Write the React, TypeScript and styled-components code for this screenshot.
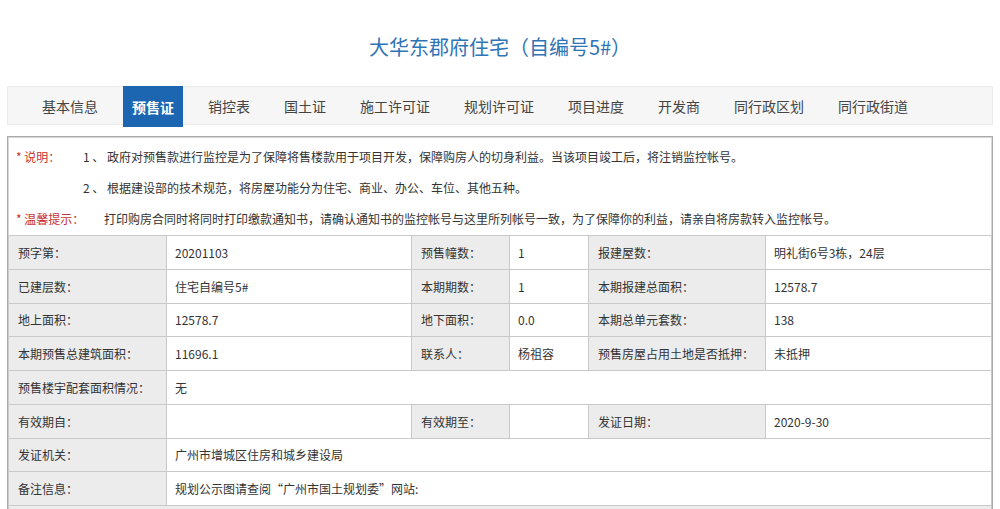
import React from "react";
import styled, { createGlobalStyle } from "styled-components";

const Global = createGlobalStyle`
  html, body { margin: 0; padding: 0; background: #fff; }
  body { font-family: "Noto Sans CJK SC", "Liberation Sans", sans-serif; color: #333; }
`;

const Page = styled.div`
  width: 986px;
  margin: 0 auto;
`;

const Title = styled.h1`
  margin: 0;
  padding-top: 34px;
  height: 86px;
  box-sizing: border-box;
  text-align: center;
  font-size: 20px;
  line-height: 26px;
  font-weight: normal;
  color: #2f74b5;
`;

const TabBar = styled.ul`
  list-style: none;
  margin: 0;
  padding: 0 0 0 25px;
  height: 39px;
  display: flex;
  gap: 16px;
  background: #f6f6f6;
  border: 1px solid #ebebeb;
  box-sizing: border-box;
`;

const Tab = styled.li<{ $active?: boolean }>`
  padding: 0 9px;
  height: ${(p) => (p.$active ? "41px" : "37px")};
  margin-top: ${(p) => (p.$active ? "-1px" : "0")};
  display: flex;
  align-items: center;
  font-size: 14px;
  color: ${(p) => (p.$active ? "#fff" : "#444")};
  font-weight: ${(p) => (p.$active ? "bold" : "normal")};
  background: ${(p) => (p.$active ? "#1c66b1" : "transparent")};
`;

const Frame = styled.div`
  margin-top: 11px;
  border: 1px solid #a9a9a9;
  box-shadow: inset 0 0 0 1px #d6d6d6;
  font-size: 12px;
`;

const Notes = styled.div`
  padding: 4px 0 1px 0;
`;

const NoteLine = styled.div`
  display: flex;
  height: 31px;
  align-items: center;
  padding-left: 8px;
`;

const NoteLabel = styled.span<{ $w: number }>`
  color: #c8322f;
  width: ${(p) => p.$w}px;
  flex: none;
`;

const NoteText = styled.span`
  color: #333;
  white-space: pre;
`;

const Table = styled.table`
  width: 100%;
  border-collapse: collapse;
  table-layout: fixed;
`;

const Row = styled.tr`
  height: 33.75px;
`;

const Label = styled.td`
  background: #ececec;
  border: 1px solid #c9c9c9;
  padding: 0 0 0 9px;
  color: #333;
  white-space: nowrap;
`;

const Value = styled.td`
  background: #fff;
  border: 1px solid #c9c9c9;
  padding: 0 0 0 8px;
  color: #333;
  white-space: nowrap;
`;

const Tail = styled.td`
  background: #ececec;
  border: 1px solid #c9c9c9;
  height: 20px;
`;

const tabs = [
  "基本信息",
  "预售证",
  "销控表",
  "国土证",
  "施工许可证",
  "规划许可证",
  "项目进度",
  "开发商",
  "同行政区划",
  "同行政街道",
];

type Cell = { l: string; v: string };
const rows: Cell[][] = [
  [
    { l: "预字第：", v: "20201103" },
    { l: "预售幢数：", v: "1" },
    { l: "报建屋数：", v: "明礼街6号3栋，24层" },
  ],
  [
    { l: "已建层数：", v: "住宅自编号5#" },
    { l: "本期期数：", v: "1" },
    { l: "本期报建总面积：", v: "12578.7" },
  ],
  [
    { l: "地上面积：", v: "12578.7" },
    { l: "地下面积：", v: "0.0" },
    { l: "本期总单元套数：", v: "138" },
  ],
  [
    { l: "本期预售总建筑面积：", v: "11696.1" },
    { l: "联系人：", v: "杨祖容" },
    { l: "预售房屋占用土地是否抵押：", v: "未抵押" },
  ],
];

const wideRowsTop: Cell[] = [{ l: "预售楼宇配套面积情况：", v: "无" }];
const validRow: Cell[] = [
  { l: "有效期自：", v: "" },
  { l: "有效期至：", v: "" },
  { l: "发证日期：", v: "2020-9-30" },
];
const wideRowsBottom: Cell[] = [
  { l: "发证机关：", v: "广州市增城区住房和城乡建设局" },
  { l: "备注信息：", v: "规划公示图请查阅“广州市国土规划委”网站:" },
];

const ThreeRow = ({ cells }: { cells: Cell[] }) => (
  <Row>
    {cells.map((c, i) => (
      <React.Fragment key={i}>
        <Label>{c.l}</Label>
        <Value>{c.v}</Value>
      </React.Fragment>
    ))}
  </Row>
);

const WideRow = ({ cell }: { cell: Cell }) => (
  <Row>
    <Label>{cell.l}</Label>
    <Value colSpan={5}>{cell.v}</Value>
  </Row>
);

export default function App() {
  return (
    <Page>
      <Global />
      <Title>大华东郡府住宅（自编号5#）</Title>
      <TabBar>
        {tabs.map((t) => (
          <Tab key={t} $active={t === "预售证"}>
            {t}
          </Tab>
        ))}
      </TabBar>
      <Frame>
        <Notes>
          <NoteLine>
            <NoteLabel $w={67}>* 说明：</NoteLabel>
            <NoteText>
              1 、 政府对预售款进行监控是为了保障将售楼款用于项目开发，保障购房人的切身利益。当该项目竣工后，将注销监控帐号。
            </NoteText>
          </NoteLine>
          <NoteLine>
            <NoteLabel $w={67}></NoteLabel>
            <NoteText>2 、 根据建设部的技术规范，将房屋功能分为住宅、商业、办公、车位、其他五种。</NoteText>
          </NoteLine>
          <NoteLine>
            <NoteLabel $w={88}>* 温馨提示：</NoteLabel>
            <NoteText>
              打印购房合同时将同时打印缴款通知书，请确认通知书的监控帐号与这里所列帐号一致，为了保障你的利益，请亲自将房款转入监控帐号。
            </NoteText>
          </NoteLine>
        </Notes>
        <Table>
          <colgroup>
            <col style={{ width: 158 }} />
            <col style={{ width: 245 }} />
            <col style={{ width: 98 }} />
            <col style={{ width: 79 }} />
            <col style={{ width: 177 }} />
            <col />
          </colgroup>
          <tbody>
            {rows.map((r, i) => (
              <ThreeRow key={i} cells={r} />
            ))}
            {wideRowsTop.map((c) => (
              <WideRow key={c.l} cell={c} />
            ))}
            <ThreeRow cells={validRow} />
            {wideRowsBottom.map((c) => (
              <WideRow key={c.l} cell={c} />
            ))}
            <tr>
              <Tail colSpan={6} />
            </tr>
          </tbody>
        </Table>
      </Frame>
    </Page>
  );
}
